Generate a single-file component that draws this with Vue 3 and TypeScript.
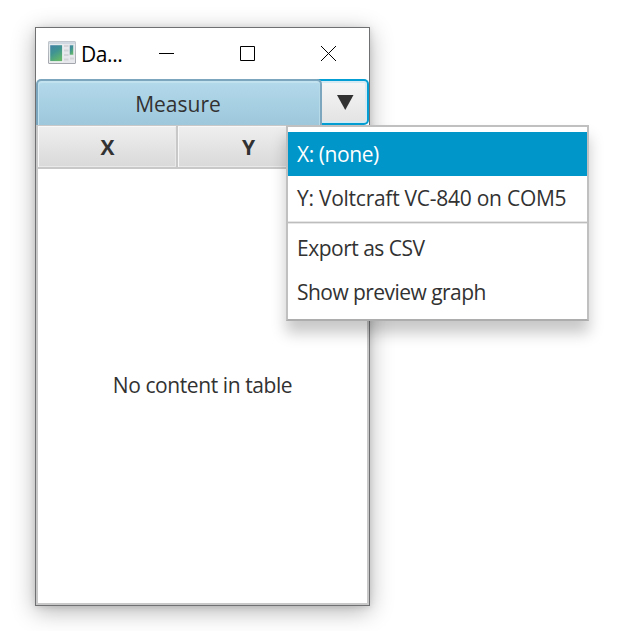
<script setup lang="ts">
import { ref } from 'vue'

interface MenuEntry {
  label: string
  key: string
}

const groups: MenuEntry[][] = [
  [
    { key: 'x', label: 'X: (none)' },
    { key: 'y', label: 'Y: Voltcraft VC-840 on COM5' },
  ],
  [
    { key: 'csv', label: 'Export as CSV' },
    { key: 'graph', label: 'Show preview graph' },
  ],
]
const columns: string[] = ['X', 'Y']
const active = ref('x')
</script>

<template>
  <main class="desktop">
    <section class="window">
      <header class="titlebar">
        <svg class="app-icon" width="28" height="24" viewBox="0 0 28 24">
          <defs>
            <linearGradient id="pane" x1="0" y1="0" x2="0.5" y2="1">
              <stop offset="0" stop-color="#4380a8" />
              <stop offset="0.5" stop-color="#3f9492" />
              <stop offset="1" stop-color="#62b56b" />
            </linearGradient>
            <linearGradient id="frame" x1="0" y1="0" x2="0" y2="1">
              <stop offset="0" stop-color="#c3c8cf" />
              <stop offset="1" stop-color="#a3a7ad" />
            </linearGradient>
          </defs>
          <rect x="0.5" y="0.5" width="27" height="22" rx="0.5" fill="#e6e8eb" stroke="url(#frame)" />
          <path d="M1 2h26" stroke="#cfd7e0" stroke-width="2" />
          <rect x="1.700" y="3.700" width="13" height="17" fill="url(#pane)" stroke="#f4f4f4" />
          <path d="M16 5h4.500M16 9.500h4.500M16 14h4.500M16 18.500h4.500M22 17.500h4" stroke="#d3d4d7" stroke-width="2" />
          <rect x="21.500" y="4" width="4" height="10" fill="url(#pane)" stroke="#dfe4e6" stroke-width="0.6" />
        </svg>
        <span class="title">Da...</span>
        <div class="controls">
          <svg width="15" height="15" viewBox="0 0 15 15"><path d="M0 7.5h15" /></svg>
          <svg width="15" height="15" viewBox="0 0 15 15"><path d="M.5.5h14v14H.5z" /></svg>
          <svg width="15" height="15" viewBox="0 0 15 15"><path d="M0 0l15 15M15 0L0 15" /></svg>
        </div>
      </header>
      <div class="split-button">
        <button class="measure"><span>Measure</span></button>
        <button class="arrow" aria-label="Options">
          <svg width="17" height="15" viewBox="0 0 17 15"><path d="M0 0h16.500L8.250 15z" /></svg>
        </button>
      </div>
      <div class="table">
        <div class="head">
          <div v-for="c in columns" :key="c" class="col">{{ c }}</div>
        </div>
        <div class="empty"><span>No content in table</span></div>
      </div>
    </section>

    <nav class="menu">
      <div v-for="(g, i) in groups" :key="i" class="group">
        <div
          v-for="e in g"
          :key="e.key"
          class="item"
          :class="[e.key, { active: active === e.key }]"
          @mouseenter="active = e.key"
        >
          <span>{{ e.label }}</span>
        </div>
      </div>
    </nav>
  </main>
</template>

<style>
body {
  background: #fff;
}
</style>

<style scoped>
.desktop {
  position: relative;
  box-sizing: border-box;
  width: 623px;
  height: 631px;
  padding: 27px 0 0 35px;
  overflow: hidden;
  background: #fff;
  color: #323232;
  font-family: 'Open Sans', 'Noto Sans', sans-serif;
  font-size: 21px;
  line-height: 30px;
}
.desktop * {
  box-sizing: border-box;
}
.window {
  display: flex;
  flex-direction: column;
  width: 335px;
  height: 579px;
  border: 1px solid #6f7072;
  background: #fff;
  box-shadow: 0 5px 22px rgba(0, 0, 0, 0.3), 0 1px 6px rgba(0, 0, 0, 0.12);
}
.titlebar {
  display: flex;
  align-items: center;
  height: 51px;
  padding-left: 12px;
  color: #000;
}
.app-icon {
  flex: none;
  margin-bottom: 2px;
}
.title {
  margin-left: 5px;
  width: 78px;
  padding-top: 1px;
  letter-spacing: -0.4px;
}
.controls {
  display: flex;
  gap: 66px;
}
.controls svg {
  fill: none;
  stroke: #000;
  stroke-width: 1;
}
.split-button {
  display: flex;
  height: 46px;
}
button {
  display: flex;
  align-items: center;
  justify-content: center;
  margin: 0;
  padding: 0;
  border: 0;
  font: inherit;
  color: #323232;
}
.measure {
  position: relative;
  z-index: 1;
  width: 286px;
  border: 2px solid #7ba6bd;
  border-bottom-width: 0;
  border-radius: 5px 5px 0 0;
  background: linear-gradient(#b2daeb, #9fc7dc);
  box-shadow: inset 1px 2px 0 #c2e2ef, inset -1px 0 0 #b7dae9;
  padding: 2px 2px 0 0;
}
.arrow {
  width: 52px;
  margin-left: -5px;
  padding-left: 5px;
  border: 2px solid #039ed3;
  border-left: 0;
  border-radius: 0 5px 5px 0;
  background: linear-gradient(#f6f6f6, #e3e3e3);
  box-shadow: inset 0 0 0 2px #d5eaf2;
}
.arrow svg {
  margin-left: 2px;
  fill: #323232;
}
.table {
  display: flex;
  flex: 1;
  flex-direction: column;
  border: 2px solid #c8c8c8;
  border-top-width: 1px;
}
.head {
  display: flex;
  height: 43px;
}
.col {
  display: flex;
  align-items: center;
  justify-content: center;
  width: 140px;
  padding-left: 1px;
  border-right: 2px solid #c8c8c8;
  border-bottom: 2px solid #c8c8c8;
  background: linear-gradient(#efefef, #d9d9d9);
  box-shadow: inset 1px 1px 0 #f8f8f8, inset -1px -1px 0 #e9e9e9;
  font-weight: 700;
}
.col:last-child {
  flex: 1;
  padding-right: 47px;
}
.empty {
  display: flex;
  flex: 1;
  align-items: center;
  justify-content: center;
  padding-bottom: 2px;
  letter-spacing: -0.42px;
}
.menu {
  position: absolute;
  left: 286px;
  top: 125px;
  width: 303px;
  height: 196px;
  padding-top: 5px;
  border: 2px solid #c0c0c0;
  border-bottom-color: #adadad;
  background: #fff;
  box-shadow: 0 12px 14px rgba(0, 0, 0, 0.22);
}
.group + .group {
  margin-top: 2px;
  padding-top: 3px;
  border-top: 1px solid #bdbdbd;
  box-shadow: 0 -1px 0 #e6e6e6, inset 0 1px 0 #e6e6e6;
}
.item {
  display: flex;
  align-items: center;
  height: 44px;
  padding-left: 9px;
  white-space: nowrap;
  letter-spacing: -0.5px;
}
.item.x {
  letter-spacing: -0.42px;
}
.item.y {
  letter-spacing: -0.26px;
}
.item.graph {
  letter-spacing: -0.55px;
}
.item.active {
  background: #0096c9;
  color: #fff;
}
</style>
